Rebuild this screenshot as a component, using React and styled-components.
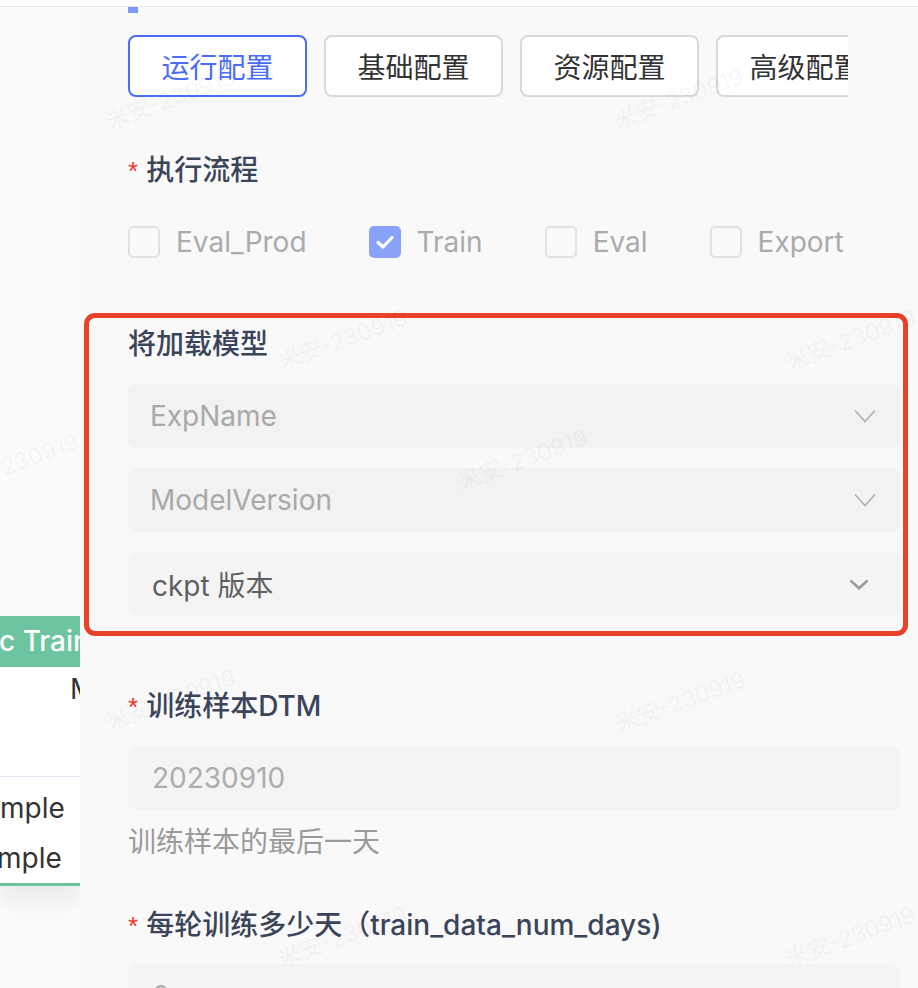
import React from 'react'
import styled, {createGlobalStyle} from 'styled-components'

const GlobalStyle = createGlobalStyle`
  html, body {
    margin: 0;
    padding: 0;
    background: #f9f9f9;
    font-family: Inter, "Noto Sans CJK SC", sans-serif;
  }
  * {
    box-sizing: border-box;
  }
`

const Page = styled.div`
  position: relative;
  width: 918px;
  height: 988px;
  overflow: hidden;
  background: #f9f9f9;
`

const TopStrip = styled.div`
  height: 7px;
  background: #fff;
  border-bottom: 1px solid #e6e6e6;
`

const Body = styled.div`
  display: flex;
  height: 981px;
`

const LeftPane = styled.div`
  width: 80px;
  flex-shrink: 0;
  background: #fafbfd;
  overflow: hidden;
`

const SideCard = styled.div`
  margin-top: 609px;
  background: #fff;
  border-bottom: 3px solid #6cc59e;
  box-shadow: 0 14px 22px rgba(0, 0, 0, 0.07);
`

const SideHeader = styled.div`
  height: 51px;
  background: #6cc59e;
  color: #fff;
  font-size: 28px;
  font-weight: 500;
  line-height: 51px;
  white-space: nowrap;
  overflow: hidden;
  margin-left: -1px;
`

const SideRow = styled.div`
  height: ${p => p.$h || 50}px;
  line-height: ${p => p.$h || 50}px;
  font-size: 28px;
  color: #333;
  white-space: nowrap;
  overflow: hidden;
  padding-left: ${p => p.$indent || 0}px;
  margin-left: ${p => p.$shift || 0}px;
`

const SideDivider = styled.div`
  height: 1px;
  background: #e2e8f4;
  margin-top: 65px;
  margin-bottom: 6px;
`

const Main = styled.div`
  flex: 1;
  padding: 0 18px 0 48px;
  background: #f9f9f9;
`

const Indicator = styled.div`
  width: 10px;
  height: 6px;
  background: #7d9af5;
`

const TabsViewport = styled.div`
  width: 720px;
  margin-top: 22px;
  overflow: hidden;
`

const TabsRow = styled.div`
  display: flex;
  gap: 17px;
  width: max-content;
`

const Tab = styled.div`
  width: 179px;
  height: 62px;
  display: flex;
  align-items: center;
  justify-content: center;
  background: #fff;
  border: 2px solid ${p => (p.$active ? '#4a6cf6' : '#d9d9d9')};
  border-radius: 8px;
  font-size: 28px;
  color: ${p => (p.$active ? '#4a6cf6' : '#333')};
  font-family: "Noto Sans CJK SC", sans-serif;
`

const Label = styled.div`
  height: 44px;
  line-height: 44px;
  font-size: 28px;
  font-weight: 500;
  color: #3b4559;
  margin-top: ${p => p.$top || 0}px;
  white-space: nowrap;
`

const Star = styled.span`
  color: #f0352a;
  font-size: 26px;
  margin-right: 8px;
  font-family: "Liberation Sans", sans-serif;
`

const CheckGroup = styled.div`
  display: flex;
  align-items: center;
  gap: 62px;
  margin-top: 34px;
  height: 32px;
`

const CheckItem = styled.label`
  display: flex;
  align-items: center;
  gap: 16px;
  font-size: 28px;
  color: #ababab;
`

const Box = styled.span`
  width: 32px;
  height: 32px;
  border-radius: 5px;
  border: 2px solid ${p => (p.$checked ? '#8aa2fa' : '#e2e2e2')};
  background: ${p => (p.$checked ? '#8aa2fa' : '#fafafa')};
  display: flex;
  align-items: center;
  justify-content: center;
`

const Highlight = styled.div`
  margin: 55px -8px 0 -44px;
  border: 5px solid #e9412a;
  border-radius: 11px;
  padding: 4px 3px 15px 39px;
`

const SelectBox = styled.div`
  height: 64px;
  margin-top: ${p => p.$top || 20}px;
  display: flex;
  align-items: center;
  justify-content: space-between;
  padding: 0 ${p => (p.$filled ? 31 : 24)}px 0 ${p => (p.$filled ? 24 : 22)}px;
  border-radius: 8px;
  background: ${p => (p.$filled ? '#f4f4f4' : '#f2f2f2')};
  font-size: 28px;
  color: ${p => (p.$filled ? '#5f5f5f' : '#a9a9a9')};
`

const InputBox = styled.div`
  height: 64px;
  margin-top: ${p => p.$top || 18}px;
  display: flex;
  align-items: center;
  padding: 0 24px;
  border-radius: 8px;
  background: #f4f4f4;
  font-size: 28px;
  color: #adadad;
`

const Help = styled.div`
  height: 44px;
  line-height: 44px;
  margin-top: 8px;
  font-size: 28px;
  color: #9a9a9a;
  font-family: "Noto Sans CJK SC", sans-serif;
`

const Watermark = styled.span`
  position: absolute;
  left: ${p => p.$x}px;
  top: ${p => p.$y}px;
  transform: translate(-50%, -50%) rotate(-20deg);
  font-size: 23px;
  color: rgba(0, 0, 0, 0.05);
  white-space: nowrap;
  pointer-events: none;
`

const ThinChevron = () => (
  <svg width="22" height="14" viewBox="0 0 22 14">
    <path d="M1 1.5 L11 12.5 L21 1.5" fill="none" stroke="#b3b3b3" strokeWidth="1.8" />
  </svg>
)

const BoldChevron = () => (
  <svg width="20" height="11" viewBox="0 0 20 11">
    <path d="M1.5 1.5 L10 9.3 L18.5 1.5" fill="none" stroke="#9c9c9c" strokeWidth="2.6" />
  </svg>
)

const Check = () => (
  <svg width="20" height="16" viewBox="0 0 20 16">
    <path d="M3 8.5 L8 13 L17 3.5" fill="none" stroke="#fff" strokeWidth="3.2" strokeLinecap="round" strokeLinejoin="round" />
  </svg>
)

const tabs = ['运行配置', '基础配置', '资源配置', '高级配置']

const flows = [
  {name: 'Eval_Prod', checked: false},
  {name: 'Train', checked: true},
  {name: 'Eval', checked: false},
  {name: 'Export', checked: false}
]

const marks = [
  [170, 97],
  [678, 97],
  [342, 338],
  [850, 338],
  [13, 462],
  [522, 458],
  [170, 698],
  [680, 700],
  [342, 935],
  [850, 935]
]

export default function App() {
  return (
    <Page>
      <GlobalStyle />
      <TopStrip />
      <Body>
        <LeftPane>
          <SideCard>
            <SideHeader>c Training</SideHeader>
            <SideRow $h={44} $indent={70}>
              Model
            </SideRow>
            <SideDivider />
            <SideRow>mple</SideRow>
            <SideRow $shift={-3}>mple</SideRow>
          </SideCard>
        </LeftPane>
        <Main>
          <Indicator />
          <TabsViewport>
            <TabsRow>
              {tabs.map((t, i) => (
                <Tab key={t} $active={i === 0}>
                  {t}
                </Tab>
              ))}
            </TabsRow>
          </TabsViewport>

          <Label $top={51}>
            <Star>*</Star>执行流程
          </Label>
          <CheckGroup>
            {flows.map(f => (
              <CheckItem key={f.name}>
                <Box $checked={f.checked}>{f.checked && <Check />}</Box>
                {f.name}
              </CheckItem>
            ))}
          </CheckGroup>

          <Highlight>
            <Label>将加载模型</Label>
            <SelectBox $top={18}>
              ExpName
              <ThinChevron />
            </SelectBox>
            <SelectBox>
              ModelVersion
              <ThinChevron />
            </SelectBox>
            <SelectBox $filled>
              ckpt 版本
              <BoldChevron />
            </SelectBox>
          </Highlight>

          <Label $top={48}>
            <Star>*</Star>训练样本DTM
          </Label>
          <InputBox>20230910</InputBox>
          <Help>训练样本的最后一天</Help>

          <Label $top={41}>
            <Star>*</Star>每轮训练多少天（train_data_num_days)
          </Label>
          <InputBox $top={17}>0</InputBox>
        </Main>
      </Body>
      {marks.map(([x, y], i) => (
        <Watermark key={i} $x={x} $y={y}>
          米安-230919
        </Watermark>
      ))}
    </Page>
  )
}
